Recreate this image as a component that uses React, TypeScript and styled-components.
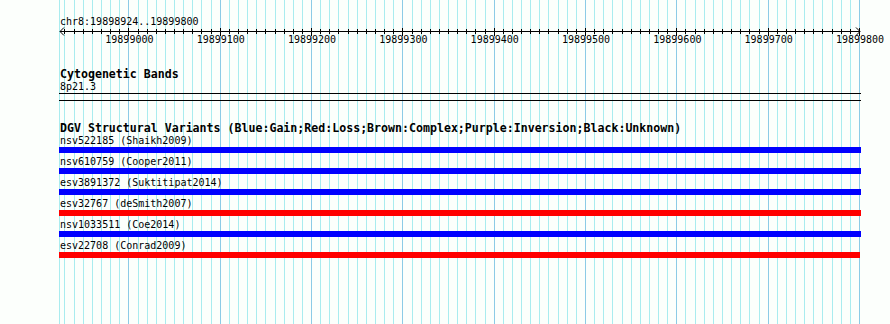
import React from 'react';
import styled, { createGlobalStyle } from 'styled-components';

const START = 19898924;
const END = 19899800;
const LEFT = 60;
const WIDTH = 800;
const toX = (bp: number) => LEFT + ((bp - START) * WIDTH) / (END - START);

type Variant = { id: string; study: string; kind: 'gain' | 'loss'; end?: number };

const variants: Variant[] = [
  { id: 'nsv522185', study: 'Shaikh2009', kind: 'gain' },
  { id: 'nsv610759', study: 'Cooper2011', kind: 'gain' },
  { id: 'esv3891372', study: 'Suktitipat2014', kind: 'gain' },
  { id: 'esv32767', study: 'deSmith2007', kind: 'loss' },
  { id: 'nsv1033511', study: 'Coe2014', kind: 'gain' },
  { id: 'esv22708', study: 'Conrad2009', kind: 'loss', end: 801 },
];

const GlobalStyle = createGlobalStyle`
  html, body {
    margin: 0;
    padding: 0;
    background: #fcfffc;
  }
`;

const Page = styled.div`
  position: relative;
  width: 890px;
  height: 324px;
  overflow: hidden;
  background: #fcfffc;
  font-family: "DejaVu Sans Mono", "Liberation Mono", monospace;
  color: #000;
`;

const GridLayer = styled.svg`
  position: absolute;
  top: 0;
  left: 0;
  pointer-events: none;
`;

const Content = styled.div`
  position: relative;
  padding: 15px 0 0 ${LEFT}px;
`;

const SmallText = styled.div<{ $lh?: number }>`
  font-size: 10px;
  line-height: ${p => p.$lh || 13}px;
  white-space: pre;
`;

const RulerSvg = styled.svg`
  display: block;
  margin-left: -${LEFT}px;
  overflow: visible;
`;

const Track = styled.section<{ $gap: number }>`
  margin-top: ${p => p.$gap}px;
`;

const TrackTitle = styled.div<{ $lh: number }>`
  font-size: 11.6px;
  font-weight: bold;
  line-height: ${p => p.$lh}px;
  white-space: pre;
`;

const BandBox = styled.div`
  width: 802px;
  height: 6px;
  border-top: 1px solid #000;
  border-bottom: 1px solid #000;
  margin-left: -1px;
`;

const VariantRow = styled.div`
  margin-bottom: 2px;
`;

const Bar = styled.div<{ $kind: 'gain' | 'loss' }>`
  height: 6px;
  margin-left: -1px;
  background: ${p => (p.$kind === 'gain' ? '#0000ff' : '#ff0000')};
`;

const gridStops: number[] = [];
for (let bp = 19898930; bp <= END; bp += 10) gridStops.push(bp);

const Grid = () => (
  <GridLayer width={890} height={324} shapeRendering="crispEdges">
    <line x1={LEFT - 0.5} x2={LEFT - 0.5} y1={0} y2={324} stroke="#a9ecef" />
    {gridStops.map(bp => {
      const x = Math.round(toX(bp)) - 0.5;
      const major = bp % 100 === 0;
      return (
        <line key={bp} x1={x} x2={x} y1={0} y2={324} stroke={major ? '#8ccbe6' : '#a9ecef'} />
      );
    })}
  </GridLayer>
);

const Ruler = () => {
  const axisY = 3.5;
  return (
    <RulerSvg width={890} height={20} shapeRendering="crispEdges">
      <line x1={LEFT} x2={toX(END)} y1={axisY} y2={axisY} stroke="#000" />
      <polyline points={`${LEFT + 4},${axisY - 4} ${LEFT},${axisY} ${LEFT + 4},${axisY + 4}`} fill="none" stroke="#000" shapeRendering="auto" />
      <polyline points={`${toX(END) - 4},${axisY - 4} ${toX(END)},${axisY} ${toX(END) - 4},${axisY + 4}`} fill="none" stroke="#000" shapeRendering="auto" />
      {gridStops.map(bp => {
        const x = Math.round(toX(bp)) - 0.5;
        const major = bp % 100 === 0;
        return (
          <line key={bp} x1={x} x2={x} y1={major ? 0 : 1} y2={major ? 8 : 6} stroke="#000" />
        );
      })}
      {gridStops
        .filter(bp => bp % 100 === 0)
        .map(bp => (
          <text
            key={bp}
            x={toX(bp)}
            y={15}
            textAnchor="middle"
            fontFamily='"DejaVu Sans Mono", "Liberation Mono", monospace'
            fontSize={10}
          >
            {bp}
          </text>
        ))}
    </RulerSvg>
  );
};

export default function App() {
  return (
    <Page>
      <GlobalStyle />
      <Grid />
      <Content>
        <SmallText>chr8:19898924..19899800</SmallText>
        <Ruler />

        <Track $gap={20}>
          <TrackTitle $lh={13}>Cytogenetic Bands</TrackTitle>
          <SmallText $lh={12}>8p21.3</SmallText>
          <BandBox />
        </Track>

        <Track $gap={21}>
          <TrackTitle $lh={12}>
            DGV Structural Variants (Blue:Gain;Red:Loss;Brown:Complex;Purple:Inversion;Black:Unknown)
          </TrackTitle>
          {variants.map(v => (
            <VariantRow key={v.id}>
              <SmallText>{`${v.id} (${v.study})`}</SmallText>
              <Bar $kind={v.kind} style={{ width: v.end || 802 }} />
            </VariantRow>
          ))}
        </Track>
      </Content>
    </Page>
  );
}
